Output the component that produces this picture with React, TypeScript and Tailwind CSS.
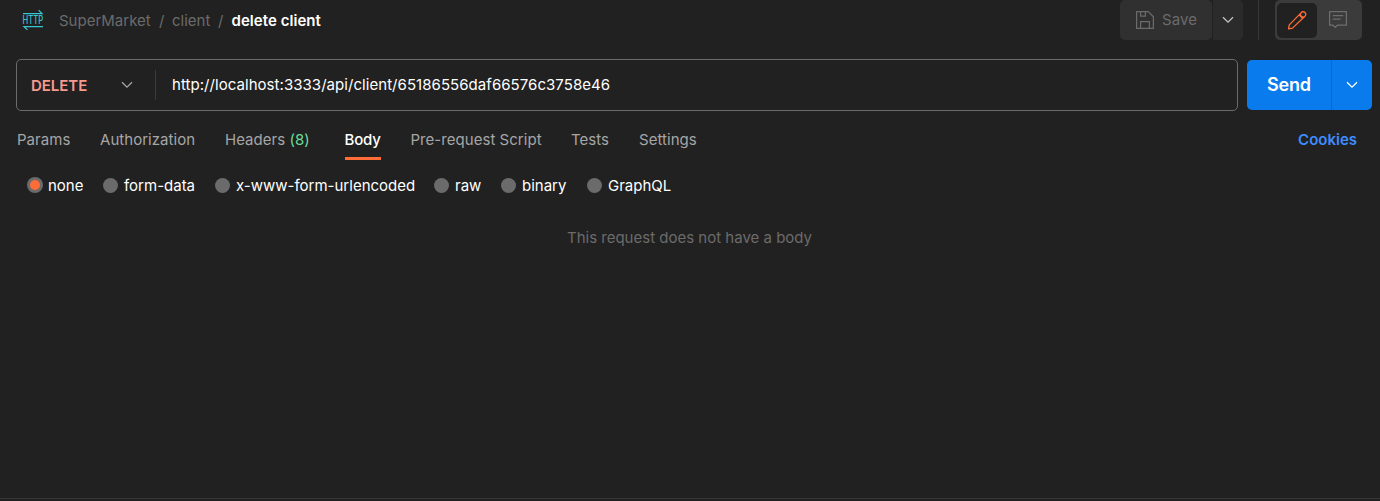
const Chevron = ({ className }: { className: string }) => (
  <svg className={className} width="12" height="8" viewBox="0 0 12 8" fill="none" stroke="currentColor" strokeWidth="1.3">
    <path d="M1 1.2 L6 6.2 L11 1.2" />
  </svg>
);

const HttpIcon = () => (
  <svg className="shrink-0 overflow-visible" width="22" height="22" viewBox="0 0 22 22" fill="none" stroke="#36c5d3" strokeWidth="1.25">
    <path d="M1 4.5 H20 L16.6 1.1" />
    <path d="M21 17.5 H2 L5.4 20.9" />
    <text x="0.5" y="15" textLength="20.6" lengthAdjust="spacingAndGlyphs" fill="#36c5d3" stroke="none" fontSize="11.5" fontWeight="500" fontFamily="Inter, sans-serif">HTTP</text>
  </svg>
);

const SaveIcon = () => (
  <svg className="shrink-0" width="20" height="20" viewBox="0 0 20 20" fill="none" stroke="#6b6b6b" strokeWidth="1.25">
    <path d="M1.6 1.6 H13.2 L18.4 6.8 V18.4 H1.6 Z" strokeLinejoin="round" />
    <path d="M5.6 1.8 V6.2 H10.4 V1.8 M5.6 18.2 V11.6 H14.4 V18.2" />
  </svg>
);

const PencilIcon = () => (
  <svg width="20" height="20" viewBox="0 0 20 20" fill="none" stroke="#ff6c37" strokeWidth="1.3" strokeLinejoin="round">
    <path d="M1.5 17.9 L2.3 13.9 L13.8 2.1 A2.65 2.65 0 1 1 17.4 5.7 L5.5 17.1 Z" />
    <path d="M12.1 3.8 L15.6 7.3 M13.8 2.1 A2.65 2.65 0 0 0 17.4 5.7" />
  </svg>
);

const CommentIcon = () => (
  <svg width="20" height="20" viewBox="0 0 20 20" fill="none" stroke="#6e6e6e" strokeWidth="1.25" strokeLinejoin="round">
    <path d="M1.6 1.6 H18.4 V15.2 H9.4 L7.2 17.4 L5 15.2 H1.6 Z" />
    <path d="M4.8 5.6 H15.2 M4.8 9.2 H12.6" />
  </svg>
);

const tabs = [
  { label: "Params", width: "w-[53px]" },
  { label: "Authorization", width: "w-[95px]" },
  { label: "Headers", width: "w-[89.5px]", count: 8 },
  { label: "Body", width: "w-[36px]", active: true },
  { label: "Pre-request Script", width: "w-[130.5px]" },
  { label: "Tests", width: "w-[38px]" },
  { label: "Settings", width: "w-[59px]" },
];

const bodyTypes = [
  { label: "none", width: "w-[76px]", selected: true },
  { label: "form-data", width: "w-[112px]" },
  { label: "x-www-form-urlencoded", width: "w-[219px]" },
  { label: "raw", width: "w-[67px]" },
  { label: "binary", width: "w-[86px]" },
  { label: "GraphQL", width: "w-[90px]" },
];

export default function App() {
  return (
    <div className="flex h-[501px] w-[1380px] flex-col overflow-hidden bg-[#212121] font-['Inter',sans-serif] text-[15px] leading-5 whitespace-nowrap text-white">
      <header className="flex h-10 shrink-0 items-center pr-[18px] pl-[22px]">
        <HttpIcon />
        <nav className="ml-[15px] flex pt-[2px] text-[#6b6b6b]">
          <span className="w-[100px]">SuperMarket</span>
          <span className="w-[13px]">/</span>
          <span className="w-[46px]">client</span>
          <span className="w-[13.5px]">/</span>
          <span className="font-semibold tracking-[0.05px] text-white">delete client</span>
        </nav>
        <div className="ml-auto flex h-10 items-center">
          <button className="flex h-10 w-[92px] items-center rounded-[5px] bg-[#303030] pl-[15px] text-[#6b6b6b]">
            <SaveIcon />
            <span className="ml-[7px] tracking-[0.1px]">Save</span>
          </button>
          <button className="ml-px flex h-10 w-[30px] items-center justify-center rounded-r-[5px] bg-[#2b2b2b]">
            <Chevron className="text-[#c4c4c4]" />
          </button>
          <div className="ml-[15px] h-10 w-px bg-[#363636]" />
          <div className="ml-4 flex h-10 w-[87px] rounded-[5px] bg-[#3b3b3b]">
            <button className="mt-[3px] ml-[2px] flex h-[35px] w-10 items-center justify-center rounded-[5px] bg-[#212121]"><PencilIcon /></button>
            <button className="flex h-10 w-[42px] items-center justify-center"><CommentIcon /></button>
          </div>
        </div>
      </header>

      <section className="mt-[19px] flex h-[52px] shrink-0 items-center pr-2 pl-4">
        <div className="flex h-[52px] w-[1222px] items-center rounded-[5px] border border-[#6b6b6b]">
          <button className="flex h-full w-[138px] items-center pl-[14px]">
            <span className="w-[90px] pt-px text-left font-semibold tracking-[-0.05px] text-[#f79a8e]">DELETE</span>
            <Chevron className="text-[#a6a6a6]" />
          </button>
          <div className="h-[30px] w-px bg-[#3b3b3b]" />
          <span className="ml-4 tracking-[0.05px]">http://localhost:3333/api/client/65186556daf66576c3758e46</span>
        </div>
        <div className="ml-[9px] flex h-[50px] w-[125px] overflow-hidden rounded-[5px] bg-[#097bed]">
          <button className="w-[84px] text-center text-[18px] font-semibold tracking-[-0.2px]">Send</button>
          <button className="flex flex-1 items-center justify-center border-l border-[#0869cb]"><Chevron className="text-white" /></button>
        </div>
      </section>

      <section className="flex h-[49px] shrink-0 items-start gap-[30px] pt-[19px] pr-[23px] pl-[17px] text-[#a6a6a6]">
        {tabs.map((tab) => (
          <div key={tab.label} className={`${tab.width} h-[30px] ${tab.active ? "border-b-[3px] border-[#ff6c37] font-medium tracking-[-0.2px] text-white" : "tracking-[0.04px]"}`}>
            {tab.label}{tab.count && <span className="text-[#6bdd9a]"> ({tab.count})</span>}
          </div>
        ))}
        <a className="ml-auto font-semibold text-[#3f8cff]">Cookies</a>
      </section>

      <section className="mt-[15px] flex h-5 shrink-0 items-center pl-[27px]">
        {bodyTypes.map((type) => (
          <label key={type.label} className={`${type.width} flex items-center`}>
            <span className={`flex shrink-0 items-center justify-center rounded-full bg-[#6b6b6b] ${type.selected ? "mr-[5px] size-4" : "mr-[6px] size-[15px]"}`}>
              {type.selected && <span className="size-[10px] rounded-full bg-[#ff6c37]" />}
            </span>
            <span className="pt-[2px]">{type.label}</span>
          </label>
        ))}
      </section>

      <p className="mt-[33px] pr-px text-center text-[#6b6b6b]">This request does not have a body</p>
      <footer className="mt-auto h-[3px] shrink-0 border-t border-[#363636]" />
    </div>
  );
}
